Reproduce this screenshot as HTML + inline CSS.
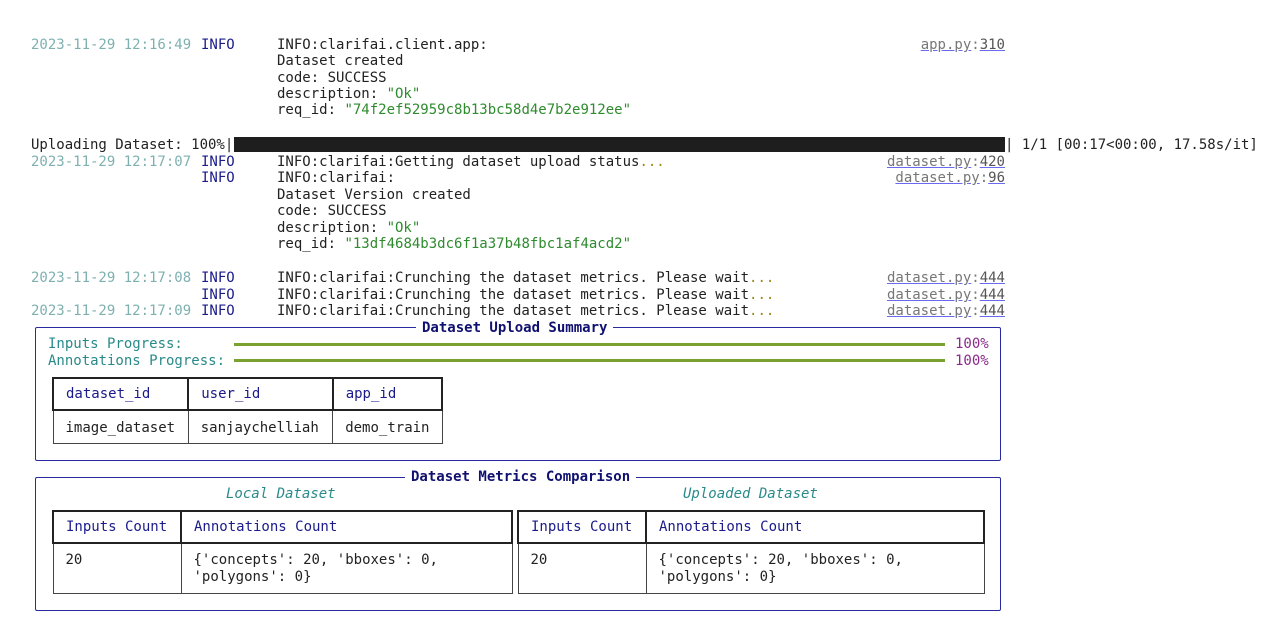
<!DOCTYPE html>
<html><head><meta charset="utf-8"><style>
body{margin:0;width:1284px;height:634px;background:#fff;position:relative;overflow:hidden;font-family:"DejaVu Sans Mono","Liberation Mono",monospace;font-size:14px;color:#222}
.t{position:absolute;white-space:pre;line-height:18px;height:18px;margin-top:1px}
.ts{color:#7fb0b0}.in{color:#1a1a8a}.g{color:#2e8b2e}.y{color:#9a8a1a}
.r{text-align:right;width:300px;color:#777}
.r u{text-decoration-color:#6a6af0}
.r b{font-weight:normal;color:#555}
.box{position:absolute;border:1.5px solid #2a2aa0;border-radius:2px}
.ttl{position:absolute;background:#fff;color:#101070;font-weight:bold;padding:0 6px;white-space:pre;line-height:18px;margin-top:1px}
.teal{color:#2a8a8a}
.bar{position:absolute;height:3px;background:#7ba22e}
.pur{color:#8a2a8a}
table{position:absolute;border-collapse:collapse;font-size:14px}
td{border:1.5px solid #444;padding:0 12px;vertical-align:top;white-space:pre;line-height:17px}
tr.h td{border:2.5px solid #222;color:#1a1a8a;height:29px;vertical-align:middle;padding-top:1px}
</style></head><body>
<div class="t ts" style="left:31px;top:35px">2023-11-29 12:16:49</div>
<div class="t in" style="left:201px;top:35px">INFO</div>
<div class="t" style="left:277px;top:35px">INFO:clarifai.client.app:</div>
<div class="t r" style="left:705px;top:35px"><u>app.py</u>:<u><b>310</b></u></div>
<div class="t" style="left:277px;top:51px">Dataset created</div>
<div class="t" style="left:277px;top:68px">code: SUCCESS</div>
<div class="t" style="left:277px;top:84px">description: <span class="g">"Ok"</span></div>
<div class="t" style="left:277px;top:100px">req_id: <span class="g">"74f2ef52959c8b13bc58d4e7b2e912ee"</span></div>

<div class="t" style="left:31px;top:135px">Uploading Dataset: 100%|</div>
<div style="position:absolute;left:234px;top:137px;width:771px;height:15px;background:#1e1e1e"></div>
<div class="t" style="left:1005px;top:135px">| 1/1 [00:17&lt;00:00, 17.58s/it]</div>

<div class="t ts" style="left:31px;top:152px">2023-11-29 12:17:07</div>
<div class="t in" style="left:201px;top:152px">INFO</div>
<div class="t" style="left:277px;top:152px">INFO:clarifai:Getting dataset upload status<span class="y">...</span></div>
<div class="t r" style="left:705px;top:152px"><u>dataset.py</u>:<u><b>420</b></u></div>
<div class="t in" style="left:201px;top:168px">INFO</div>
<div class="t" style="left:277px;top:168px">INFO:clarifai:</div>
<div class="t r" style="left:705px;top:168px"><u>dataset.py</u>:<u><b>96</b></u></div>
<div class="t" style="left:277px;top:185px">Dataset Version created</div>
<div class="t" style="left:277px;top:201px">code: SUCCESS</div>
<div class="t" style="left:277px;top:218px">description: <span class="g">"Ok"</span></div>
<div class="t" style="left:277px;top:234px">req_id: <span class="g">"13df4684b3dc6f1a37b48fbc1af4acd2"</span></div>

<div class="t ts" style="left:31px;top:268px">2023-11-29 12:17:08</div>
<div class="t in" style="left:201px;top:268px">INFO</div>
<div class="t" style="left:277px;top:268px">INFO:clarifai:Crunching the dataset metrics. Please wait<span class="y">...</span></div>
<div class="t r" style="left:705px;top:268px"><u>dataset.py</u>:<u><b>444</b></u></div>
<div class="t in" style="left:201px;top:285px">INFO</div>
<div class="t" style="left:277px;top:285px">INFO:clarifai:Crunching the dataset metrics. Please wait<span class="y">...</span></div>
<div class="t r" style="left:705px;top:285px"><u>dataset.py</u>:<u><b>444</b></u></div>
<div class="t ts" style="left:31px;top:301px">2023-11-29 12:17:09</div>
<div class="t in" style="left:201px;top:301px">INFO</div>
<div class="t" style="left:277px;top:301px">INFO:clarifai:Crunching the dataset metrics. Please wait<span class="y">...</span></div>
<div class="t r" style="left:705px;top:301px"><u>dataset.py</u>:<u><b>444</b></u></div>

<div class="box" style="left:35px;top:327px;width:964px;height:132px"></div>
<div class="ttl" style="left:416px;top:318px">Dataset Upload Summary</div>
<div class="t teal" style="left:48px;top:334px">Inputs Progress:</div>
<div class="t teal" style="left:48px;top:351px">Annotations Progress:</div>
<div class="bar" style="left:234px;top:343px;width:711px"></div>
<div class="bar" style="left:234px;top:359px;width:711px"></div>
<div class="t pur" style="left:955px;top:334px">100%</div>
<div class="t pur" style="left:955px;top:351px">100%</div>
<table style="left:52px;top:377px;width:391px">
<tr class="h"><td style="width:110px">dataset_id</td><td style="width:120px">user_id</td><td>app_id</td></tr>
<tr><td style="height:30px;vertical-align:middle;padding-top:2px">image_dataset</td><td style="vertical-align:middle;padding-top:2px">sanjaychelliah</td><td style="vertical-align:middle;padding-top:2px">demo_train</td></tr>
</table>

<div class="box" style="left:35px;top:477px;width:964px;height:132px"></div>
<div class="ttl" style="left:405px;top:467px">Dataset Metrics Comparison</div>
<div class="t teal" style="left:226px;top:484px;font-style:italic">Local Dataset</div>
<div class="t teal" style="left:683px;top:484px;font-style:italic">Uploaded Dataset</div>
<table style="left:52px;top:510px;width:461px">
<tr class="h"><td style="width:102px">Inputs Count</td><td>Annotations Count</td></tr>
<tr><td style="height:41px;padding-top:8px">20</td><td style="padding-top:8px">{'concepts': 20, 'bboxes': 0,
'polygons': 0}</td></tr>
</table>
<table style="left:517px;top:510px;width:468px">
<tr class="h"><td style="width:102px">Inputs Count</td><td>Annotations Count</td></tr>
<tr><td style="height:41px;padding-top:8px">20</td><td style="padding-top:8px">{'concepts': 20, 'bboxes': 0,
'polygons': 0}</td></tr>
</table>
</body></html>
